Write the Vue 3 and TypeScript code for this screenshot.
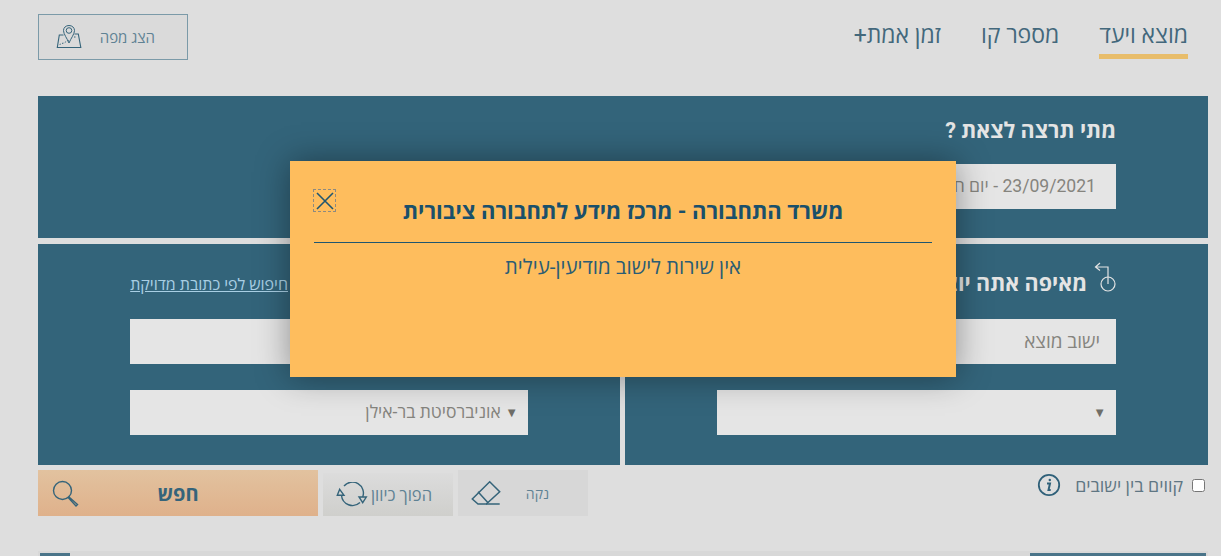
<template>
  <div class="page" dir="rtl">
    <header class="top">
      <nav class="tabs">
        <a v-for="tab in tabs" :key="tab" class="tab" :class="{ active: tab === tabs[0] }">{{ tab }}</a>
      </nav>
      <button class="map-btn">
        <span>הצג מפה</span>
        <svg width="26" height="26" viewBox="0 0 26 26" fill="none" stroke="#35647a" stroke-width="1">
          <path d="M13 1.500c-3.200 0-5.500 2.200-5.500 5 0 3.600 3.700 8 5.500 12.500 1.800-4.500 5.500-8.900 5.500-12.500 0-2.800-2.300-5-5.500-5z" />
          <circle cx="13" cy="6.500" r="2.800" />
          <path d="M7.500 11H3.300L1.300 23.500h23.500L22.300 10H18.500" stroke-width="1.100" />
          <path d="M3.500 21c2-2.500 4-1 6-3s3-1 3.500-2M18 13h3" stroke-dasharray="1.500 1.500" />
        </svg>
      </button>
    </header>

    <section class="panel when">
      <h2 class="heading">מתי תרצה לצאת ?</h2>
      <div class="field">23/09/2021 - יום חמישי</div>
    </section>

    <div class="panels">
      <section class="panel from">
        <div class="head-row">
          <svg class="start-icon" width="22" height="30" viewBox="0 0 22 30" fill="none" stroke="#e4e4e4" stroke-width="1.200">
            <circle cx="14" cy="22" r="7" />
            <path d="M14 22V5H1.500M6 1 1.500 5 6 8.500" />
          </svg>
          <h2 class="heading">מאיפה אתה יוצא ?</h2>
        </div>
        <div class="field placeholder">ישוב מוצא</div>
        <div class="field select"><span class="arrow">▼</span></div>
      </section>
      <section class="panel to">
        <div class="head-row">
          <a class="exact-link">חיפוש לפי כתובת מדויקת</a>
        </div>
        <div class="field placeholder"></div>
        <div class="field select"><span class="arrow">▼</span> אוניברסיטת בר-אילן</div>
      </section>
    </div>

    <div class="actions">
      <div class="lines-check">
        <input type="checkbox" />
        <label>קווים בין ישובים</label>
        <svg width="24" height="24" viewBox="0 0 24 24" fill="none" stroke="#2f6079">
          <circle cx="12" cy="12" r="10.200" stroke-width="1.800" />
          <path d="M10 10.500h3l-1.500 6.500h2.200" stroke-width="2" />
          <circle cx="12.800" cy="7" r="1.200" fill="#2f6079" stroke="none" />
        </svg>
      </div>
      <div class="buttons">
        <button class="act clean">
          <span>נקה</span>
          <svg width="30" height="26" viewBox="0 0 30 26" fill="none" stroke="#35647a" stroke-width="1.500">
            <path d="M18.700 1.700 28.700 11.700 15.300 24H7L1.300 19z" />
            <path d="M7 11.700l10 11M15 24h13.700" />
          </svg>
        </button>
        <button class="act swap">
          <span>הפוך כיוון</span>
          <svg width="32" height="26" viewBox="0 0 32 26" fill="none" stroke="#35647a" stroke-width="1.400">
            <path d="M8 4A11 11 0 0 1 26.700 15" />
            <path d="M24 20.500A11 11 0 0 1 5.500 13.300" />
            <path d="M23 15h7.300l-3.600 5.700zM3.700 7.300 8 13.300H1.300z" />
          </svg>
        </button>
        <button class="act search">
          <svg width="27" height="27" viewBox="0 0 27 27" fill="none" stroke="#35647a" stroke-width="1.400">
            <circle cx="10.500" cy="10.500" r="9" />
            <path d="M17 17l8.500 7.500-1.500 1.500-7.500-8z" />
          </svg>
          <span>חפש</span>
          <i class="spacer"></i>
        </button>
      </div>
    </div>

    <div class="results">
      <div class="result-side right"></div>
      <div class="result-side left"></div>
    </div>

    <div class="modal">
      <button class="close">
        <svg width="20" height="20" viewBox="0 0 20 20" stroke="#1f5670" stroke-width="1.600">
          <path d="M2 2l16 16M18 2 2 18" />
        </svg>
      </button>
      <h3 class="modal-title">משרד התחבורה - מרכז מידע לתחבורה ציבורית</h3>
      <p class="modal-text">{{ message }}</p>
    </div>
  </div>
</template>

<script setup lang="ts">
const tabs: string[] = ['מוצא ויעד', 'מספר קו', 'זמן אמת+']
const message = 'אין שירות לישוב מודיעין-עילית'
</script>

<style>
html,
body {
  margin: 0;
  background: #dedede;
  overflow: hidden;
}
</style>

<style scoped>
.page {
  position: relative;
  width: 1221px;
  height: 556px;
  overflow: hidden;
  box-sizing: border-box;
  padding: 0 13px 0 38px;
  font-family: Roboto, "Open Sans", "Liberation Sans", sans-serif;
  color: #35647a;
}

.top {
  height: 96px;
  display: flex;
  justify-content: space-between;
  align-items: flex-start;
}

.tabs {
  display: flex;
  gap: 40px;
  padding: 21px 20px 0 0;
}

.tab {
  font-size: 23px;
  line-height: 30px;
  height: 38px;
  box-sizing: border-box;
  color: #43687c;
}

.tab.active {
  border-bottom: 5px solid #e8bd6b;
}

.map-btn {
  margin-top: 14px;
  width: 150px;
  height: 46px;
  box-sizing: border-box;
  display: flex;
  align-items: center;
  justify-content: flex-start;
  gap: 18px;
  padding: 0 32px 0 0;
  background: #dadada;
  border: 1px solid #7b9aa8;
  font: inherit;
  font-size: 15px;
  color: #5f8294;
}

.panel {
  background: #33647a;
  box-sizing: border-box;
  padding: 0 92px;
}

.when {
  height: 142px;
  padding-top: 21px;
}

.heading {
  margin: 0;
  font-size: 21.500px;
  line-height: 28px;
  font-weight: 700;
  color: #e4e4e4;
}

.when .field {
  margin-top: 19px;
  padding: 0 20px;
  font-size: 17.600px;
}

.field {
  width: 399px;
  height: 45px;
  box-sizing: border-box;
  padding: 0 16px;
  background: #e5e5e5;
  color: #85847e;
  font-size: 19px;
  line-height: 45px;
}

.panels {
  display: grid;
  grid-template-columns: 583px 582px;
  gap: 5px;
  margin-top: 6px;
  height: 221px;
}

.to .field {
  width: 398px;
}

.head-row {
  height: 75px;
  display: flex;
  align-items: flex-start;
  gap: 7px;
  padding-top: 26px;
  box-sizing: border-box;
}

.start-icon {
  margin-top: -8px;
}

.to .head-row {
  justify-content: flex-end;
}

.exact-link {
  width: 158px;
  margin-top: 5px;
  font-size: 16px;
  line-height: 20px;
  white-space: nowrap;
  text-decoration: underline;
  color: #a9cfe4;
}

.select {
  margin-top: 26px;
  padding: 0 10px;
  font-size: 17.500px;
}

.arrow {
  font-size: 13px;
  vertical-align: 1px;
  color: #6f6e68;
}

.actions {
  display: flex;
  justify-content: space-between;
  align-items: flex-start;
  margin-top: 5px;
}

.lines-check {
  display: flex;
  align-items: center;
  height: 30px;
  font-size: 17.800px;
  color: #5f7683;
}

.lines-check input {
  width: 13px;
  height: 13px;
  margin: 0 3px 0 0;
}

.lines-check label {
  margin: 0 9px 0 14px;
}

.buttons {
  display: flex;
  gap: 5px;
}

.act {
  height: 46px;
  box-sizing: border-box;
  border: 0;
  padding: 0;
  display: flex;
  align-items: center;
  font: inherit;
  color: #5f8294;
  font-size: 14px;
}

.clean {
  width: 130px;
  background: #d7d7d7;
  padding-right: 39px;
  gap: 25px;
}

.swap {
  width: 130px;
  margin-top: 3px;
  height: 43px;
  background: linear-gradient(#dcdcdc, #cfcfcc);
  padding-right: 21px;
  gap: 3px;
  font-size: 16.500px;
}

.search {
  width: 280px;
  padding: 0 14px;
  justify-content: space-between;
  background: linear-gradient(#e2c29f, #dfb18b);
  font-size: 20px;
  font-weight: 700;
  color: #35647a;
}

.search svg {
  order: 3;
}

.spacer {
  order: 1;
  width: 27px;
}

.search span {
  order: 2;
}

.results {
  display: flex;
  justify-content: space-between;
  height: 30px;
  margin-top: 35px;
  padding: 2px 2px 0;
  background: #d8d8d8;
}

.result-side {
  background: #4a7489;
}

.result-side.right {
  width: 176px;
}

.result-side.left {
  width: 30px;
}

.modal {
  position: absolute;
  left: 290px;
  top: 161px;
  width: 666px;
  height: 216px;
  box-sizing: border-box;
  padding: 36px 24px 0;
  background: #febd5d;
  box-shadow: 0 0 32px rgba(0, 0, 0, 0.38);
  text-align: center;
}

.close {
  position: absolute;
  left: 23px;
  top: 28px;
  width: 23px;
  height: 23px;
  padding: 0;
  display: flex;
  align-items: center;
  justify-content: center;
  background: none;
  border: 1px dashed #8d8a80;
}

.modal-title {
  margin: 0;
  height: 45px;
  line-height: 30px;
  border-bottom: 1px solid #1f5670;
  font-size: 22px;
  font-weight: 700;
  color: #1a506b;
}

.modal-text {
  margin: 11px 0 0;
  font-size: 20.500px;
  line-height: 26px;
  color: #2a5c74;
}
</style>
